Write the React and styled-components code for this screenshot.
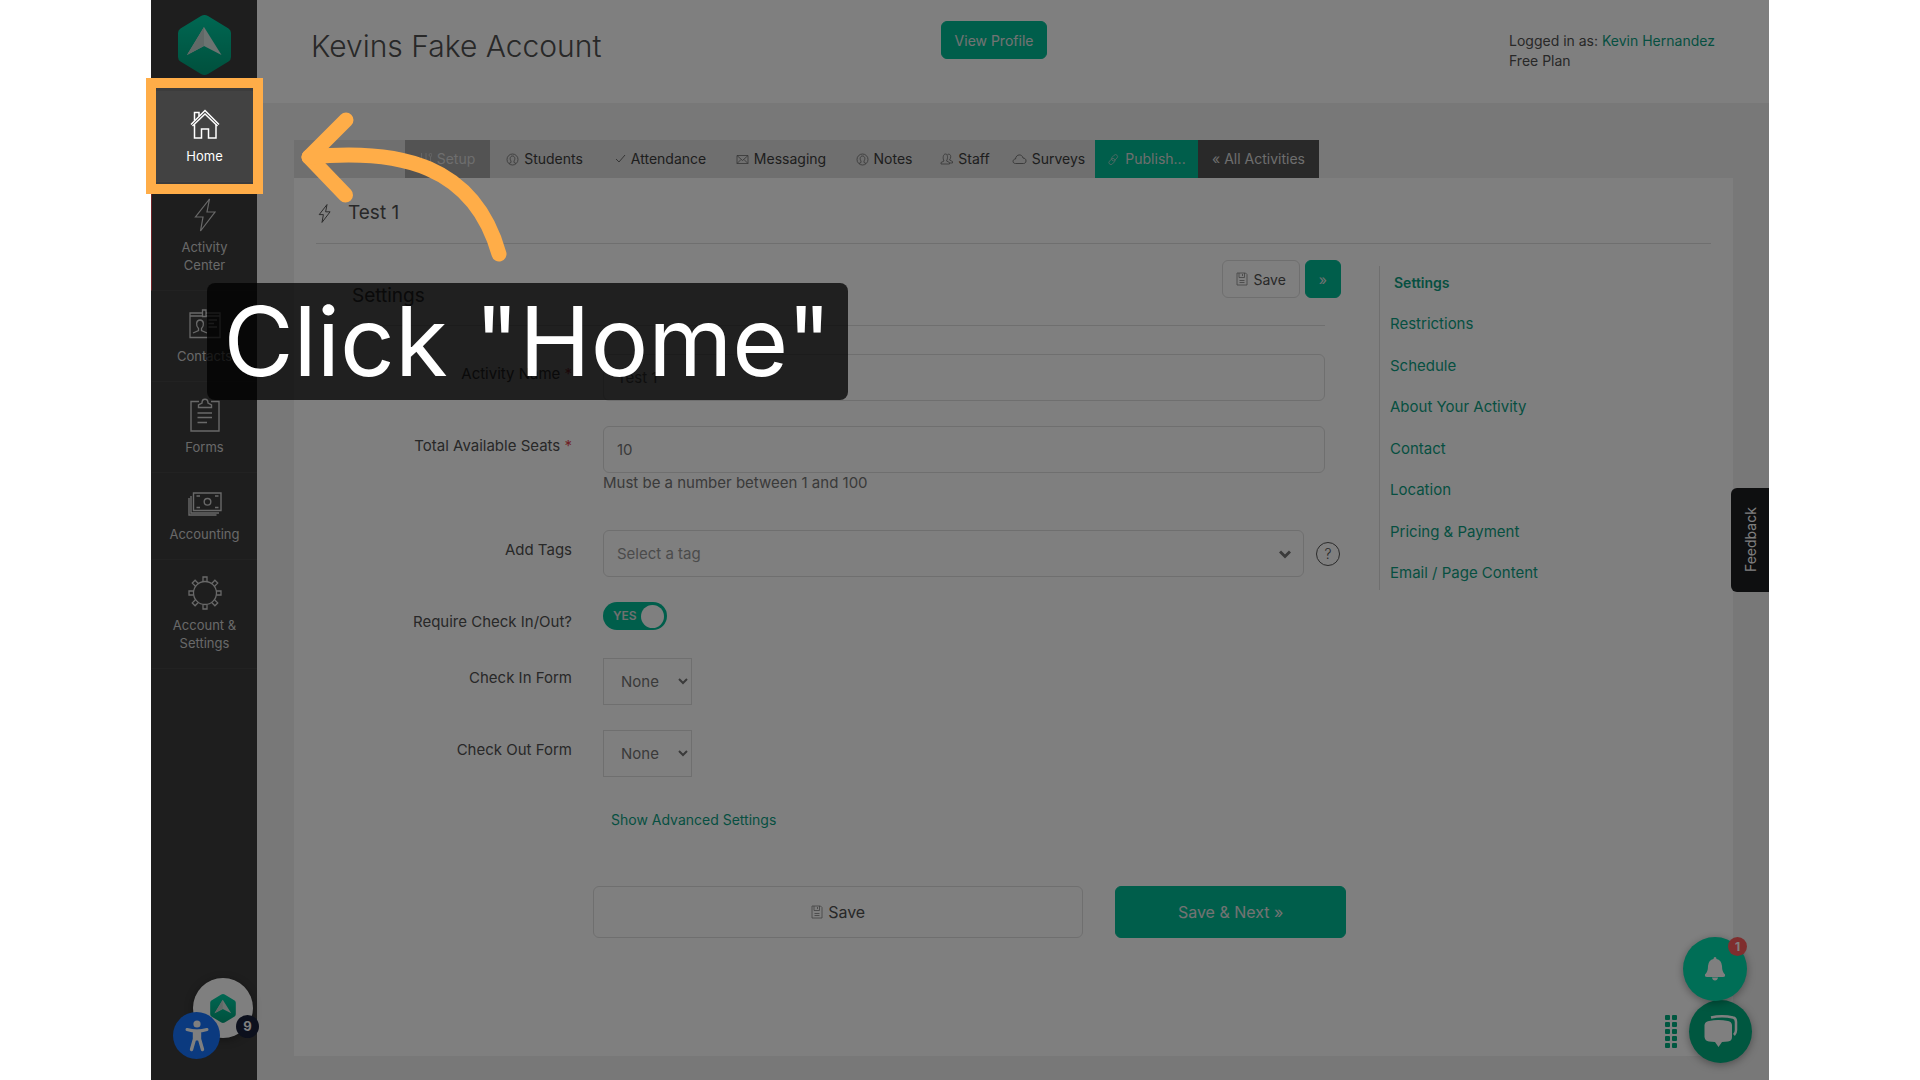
import React, { useState } from "react";
import styled, { createGlobalStyle, ThemeProvider } from "styled-components";

const theme = {
  green: "#00bc96",
  link: "#0d9f83",
  text: "#505050",
  muted: "#747474",
  line: "#dedede",
  band: "#f0f0f0",
  dark: "#3c3c3c",
  orange: "#ffad48",
};

const GlobalStyle = createGlobalStyle`
  * {
    box-sizing: border-box;
  }
  body {
    margin: 0;
    background: #ffffff;
    font-family: Inter, "Open Sans", sans-serif;
    font-size: 14px;
    line-height: 20px;
    color: #505050;
  }
  a {
    text-decoration: none;
  }
  button, input, select {
    font-family: inherit;
  }
`;

const Page = styled.div`
  min-height: 100vh;
  padding: 0 151px;
  display: flex;
`;

const Stage = styled.div`
  position: relative;
  flex: 1;
  display: flex;
  overflow: hidden;
  background: ${({ theme }) => theme.band};
`;

/* sidebar */

const Sidebar = styled.nav`
  width: 106px;
  flex-shrink: 0;
  background: ${({ theme }) => theme.dark};
`;

const LogoLink = styled.a`
  height: 91px;
  padding-top: 15px;
  display: flex;
  justify-content: center;
  align-items: flex-start;
`;

const SideItem = styled.a`
  display: flex;
  flex-direction: column;
  align-items: center;
  gap: 4px;
  padding: 14px 14px 16px;
  border-bottom: 1px solid #444444;
  border-left: 1px solid ${({ $current }) => ($current ? "#e0454f" : "transparent")};
  background: ${({ $hover }) => ($hover ? "#424242" : "transparent")};
  color: ${({ $hover }) => ($hover ? "#ffffff" : "#d2d2d2")};
  font-size: 13px;
  line-height: 18px;
  text-align: center;
`;

const SideIcon = styled.span`
  height: ${({ $short }) => ($short ? 34 : 38)}px;
  display: flex;
  align-items: center;
`;

/* header */

const Content = styled.div`
  flex: 1;
  display: flex;
  flex-direction: column;
`;

const Header = styled.header`
  height: 103px;
  padding: 21px 47px 0 54px;
  display: grid;
  grid-template-columns: 14fr auto 15fr;
  align-items: start;
  background: #ffffff;
`;

const AccountName = styled.h1`
  margin: 0;
  padding-top: 8px;
  font-size: 30px;
  line-height: 34px;
  font-weight: 300;
`;

const UserInfo = styled.div`
  justify-self: end;
  min-width: 213px;
  padding-top: 10px;
`;

const TextLink = styled.a`
  color: ${({ theme }) => theme.link};
`;

const Button = styled.button`
  display: flex;
  align-items: center;
  justify-content: center;
  gap: 5px;
  height: ${({ $large }) => ($large ? 52 : 38)}px;
  padding: 0 ${({ $large }) => ($large ? 0 : 13)}px;
  flex: ${({ $grow }) => ($grow ? `${$grow} 1 0` : "none")};
  font-size: ${({ $large }) => ($large ? 16 : 14)}px;
  border-radius: 6px;
  border: 1px solid ${({ $primary, theme }) => ($primary ? theme.green : theme.line)};
  background: ${({ $primary, theme }) => ($primary ? theme.green : "#ffffff")};
  color: ${({ $primary, theme }) => ($primary ? "#e6e6e6" : theme.text)};

  svg {
    opacity: 0.7;
  }
`;

/* tabs and panel */

const Work = styled.main`
  flex: 1;
  padding: 37px 36px 24px 37px;
  display: flex;
  flex-direction: column;
`;

const Tabs = styled.div`
  align-self: flex-start;
  display: flex;
  padding-left: 111px;
  background: #dedede;
`;

const Tab = styled.a`
  min-width: ${({ $w }) => $w}px;
  height: 38px;
  display: flex;
  align-items: center;
  justify-content: center;
  gap: 5px;
  font-size: 14px;
  color: ${({ $tone }) => ($tone ? "#dcdcdc" : "#3c3c3c")};
  background: ${({ $tone, theme }) =>
    ({ current: "#a6a6a6", green: theme.green, dark: "#525252" })[$tone] || "transparent"};

  svg {
    opacity: 0.7;
  }
`;

const Panel = styled.section`
  flex: 1;
  padding: 0 22px;
  background: #ffffff;
`;

const PanelTitle = styled.h2`
  margin: 0;
  height: 66px;
  padding: 5px 2px 0;
  display: flex;
  align-items: center;
  gap: 17px;
  border-bottom: 1px solid ${({ theme }) => theme.line};
  font-size: 19px;
  font-weight: 400;
`;

const Columns = styled.div`
  display: flex;
`;

const Form = styled.form`
  flex: 1;
  padding: 16px 33px 0 0;
`;

const FormHead = styled.div`
  height: 65px;
  padding: 0 5px 0 36px;
  display: flex;
  gap: 5px;
`;

const FormTitle = styled.h3`
  flex: 1;
  margin: 0;
  padding-top: 24px;
  font-size: 19px;
  line-height: 24px;
  font-weight: 400;
`;

const Rule = styled.hr`
  margin: 0 21px 28px 36px;
  border: 0;
  border-top: 1px solid ${({ theme }) => theme.line};
`;

const Fields = styled.div`
  display: flex;
  flex-direction: column;
  gap: 25px;
  padding-right: 21px;
`;

const Row = styled.div`
  display: grid;
  grid-template-columns: 256px 1fr;
  column-gap: 31px;
`;

const Label = styled.label`
  padding-top: 10px;
  font-size: 15px;
  text-align: right;
`;

const Star = styled.span`
  color: #e0454f;
`;

const Input = styled.input`
  width: 100%;
  height: 47px;
  padding: 0 13px;
  border: 1px solid ${({ theme }) => theme.line};
  border-radius: 6px;
  font-size: 15px;
  color: ${({ theme }) => theme.muted};
`;

const Hint = styled.div`
  height: 32px;
  font-size: 15px;
  color: ${({ theme }) => theme.muted};
`;

const TagLine = styled.div`
  display: flex;
  align-items: center;
  gap: 12px;
  margin-right: -15px;
`;

const TagBox = styled.div`
  position: relative;
  flex: 1;

  svg {
    position: absolute;
    right: 13px;
    top: 20px;
    pointer-events: none;
  }
`;

const TagSelect = styled.select`
  display: block;
  width: 100%;
  height: 47px;
  padding: 0 13px;
  appearance: none;
  border: 1px solid ${({ theme }) => theme.line};
  border-radius: 6px;
  background: #ffffff;
  font-size: 15px;
  color: #979797;
`;

const HelpButton = styled.button`
  width: 24px;
  height: 24px;
  padding: 0;
  border: 1px solid #555555;
  border-radius: 50%;
  background: transparent;
  font-size: 14px;
  font-weight: 300;
  line-height: 20px;
  color: ${({ theme }) => theme.text};
`;

const SmallSelect = styled.select`
  width: 89px;
  height: 47px;
  padding: 0 4px 0 13px;
  border: 1px solid ${({ theme }) => theme.line};
  border-radius: 0;
  background: #ffffff;
  font-size: 15px;
  color: ${({ theme }) => theme.muted};
`;

const SwitchCell = styled.div`
  height: 31px;
`;

const Switch = styled.label`
  display: flex;
  align-items: center;
  justify-content: space-between;
  width: 64px;
  height: 28px;
  padding: 0 3px 0 10px;
  border-radius: 14px;
  background: ${({ $on, theme }) => ($on ? theme.green : "#bbbbbb")};
  flex-direction: ${({ $on }) => ($on ? "row" : "row-reverse")};
  color: #e0e0e0;
  font-size: 12px;
  font-weight: 600;

  input {
    position: absolute;
    opacity: 0;
  }
`;

const Knob = styled.span`
  width: 23px;
  height: 23px;
  border-radius: 50%;
  background: #ffffff;
`;

const Advanced = styled.div`
  padding: 8px 0 0 8px;
  grid-column: 2;
`;

const FormFoot = styled.div`
  display: flex;
  gap: 32px;
  padding: 56px 0 0 277px;
`;

const SectionNav = styled.nav`
  width: 332px;
  min-height: 324px;
  margin-top: 22px;
  padding: 8px 0 8px 10px;
  align-self: flex-start;
  display: flex;
  flex-direction: column;
  align-items: flex-start;
  justify-content: space-between;
  border-left: 1px solid ${({ theme }) => theme.line};
`;

const SectionLink = styled.a`
  font-size: ${({ $current }) => ($current ? 14 : 15)}px;
  line-height: 18px;
  color: ${({ theme }) => theme.link};
  font-weight: ${({ $current }) => ($current ? 600 : 400)};
  padding-left: ${({ $current }) => ($current ? 4 : 0)}px;
`;

/* floating widgets */

const Feedback = styled.button`
  position: absolute;
  right: 0;
  top: 488px;
  width: 38px;
  height: 104px;
  padding: 0;
  border: 0;
  border-radius: 0 6px 6px 0;
  background: #1c1e21;
  color: #ffffff;
  font-size: 14px;
  writing-mode: vertical-rl;
  transform: rotate(180deg);
`;

const Bubble = styled.button`
  position: absolute;
  left: ${({ $left }) => ($left === undefined ? "auto" : `${$left}px`)};
  right: ${({ $right }) => ($right === undefined ? "auto" : `${$right}px`)};
  bottom: ${({ $bottom }) => $bottom}px;
  width: ${({ $size }) => $size}px;
  height: ${({ $size }) => $size}px;
  padding: 0;
  display: flex;
  align-items: center;
  justify-content: center;
  border: 0;
  border-radius: 50%;
  background: ${({ $color }) => $color};
  box-shadow: ${({ $flat }) => ($flat ? "none" : "0 2px 8px rgba(0, 0, 0, 0.35)")};
  color: #ffffff;
`;

const Count = styled.span`
  position: absolute;
  right: ${({ $right }) => $right}px;
  ${({ $side }) => $side}: 0;
  width: ${({ $size }) => $size}px;
  height: ${({ $size }) => $size}px;
  border-radius: 50%;
  background: ${({ $color }) => $color};
  color: #ffffff;
  font-size: ${({ $size }) => ($size > 20 ? 13 : 12)}px;
  font-weight: 700;
  line-height: ${({ $size }) => $size}px;
  text-align: center;
`;

const DotGrip = styled.div`
  position: absolute;
  right: 92px;
  bottom: 32px;
  display: grid;
  grid-template-columns: 5px 5px;
  grid-auto-rows: 5px;
  gap: 2px;

  span {
    border-radius: 1px;
    background: #00ae80;
  }
`;

/* tour step */

const TourLayer = styled.div`
  position: absolute;
  inset: 0;
  pointer-events: none;
`;

const Dim = styled.div`
  position: absolute;
  inset: 0;
  overflow: hidden;

  &::before {
    content: "";
    position: absolute;
    left: 5px;
    top: 88px;
    width: 97px;
    height: 96px;
    box-shadow: 0 0 0 3000px rgba(0, 0, 0, 0.5);
  }
`;

const TourFrame = styled.div`
  position: absolute;
  left: 146px;
  top: 78px;
  width: 117px;
  height: 116px;
  border: 10px solid ${({ theme }) => theme.orange};
  pointer-events: none;
`;

const TourArrow = styled.svg`
  position: absolute;
  left: 296px;
  top: 106px;
  pointer-events: none;
`;

const TourText = styled.div`
  position: absolute;
  left: 207px;
  top: 283px;
  width: 641px;
  height: 117px;
  border-radius: 8px;
  background: rgba(0, 0, 0, 0.75);
  color: #ffffff;
  font-size: 96px;
  font-weight: 400;
  line-height: 116px;
  text-align: center;
  white-space: nowrap;
`;

const Line = ({ w, h, sw = 1, children }) => (
  <svg
    width={w}
    height={h}
    viewBox={`0 0 ${w} ${h}`}
    fill="none"
    stroke="currentColor"
    strokeWidth={sw}
    aria-hidden="true"
  >
    {children}
  </svg>
);

const Hexagon = ({ id, w, h }) => (
  <svg width={w} height={h} viewBox="0 0 53 60" aria-hidden="true">
    <defs>
      <linearGradient id={id} x1="0" y1="0" x2="0" y2="1">
        <stop offset="0" stopColor="#00cfa5" />
        <stop offset="1" stopColor="#00a07a" />
      </linearGradient>
    </defs>
    <path
      d="M23 1Q26.500-1 30 1L50.500 13.500Q53 15 53 18V42Q53 45 50.500 46.500L30 59Q26.500 61 23 59L2.500 46.500Q0 45 0 42V18Q0 15 2.500 13.500Z"
      fill={`url(#${id})`}
    />
    <path d="M26 12L43.500 40L26 31L9 40Z" fill="#d9e6e2" />
    <path d="M26 12V31L9 40Z" fill="#c3d3ce" />
  </svg>
);

const HomeIcon = () => (
  <Line w={30} h={30} sw={1.5}>
    <path d="M1 15.500L15 1.500L29 15.500M2.500 17L15 5L27.500 17" />
    <path d="M4.500 15.500V29H11.500V20H18.500V29H26V15.500M4.500 11.500V3.500H9V7" />
  </Line>
);

const BoltIcon = ({ w = 22, h = 34 }) => (
  <svg width={w} height={h} viewBox="0 0 22 34" fill="none" stroke="currentColor" strokeWidth={w > 15 ? 1.200 : 1.700} aria-hidden="true">
    <path d="M15.500 1L1.500 19H9L6.500 33L21 14H13Z" />
  </svg>
);

const ContactsIcon = () => (
  <Line w={32} h={30} sw={1.300}>
    <path d="M13 4H1V28.500H31V4H17M1 7H13M17 7H31M13.500 1H17V7.500H13.500Z" />
    <path d="M4 24L9.500 21.500V19.500C6.500 16.500 7 11 11 11S15.500 16.500 12.500 19.500V21.500L18 24M19.500 11H28M19.500 14.500H25M19.500 18H28" />
  </Line>
);

const FormsIcon = () => (
  <Line w={30} h={34} sw={1.400}>
    <path d="M9 3.500H1V33H29V3.500H21" />
    <path d="M8.500 9.500V7L12 5C12 0 18 0 18 5L21.500 7V9.500ZM7.500 15H22M7.500 19.500H22M7.500 24.500H17" />
  </Line>
);

const MoneyIcon = () => (
  <Line w={34} h={24} sw={1.400}>
    <path d="M5.500 1H33V18.500H5.500ZM3 4V21H31M1 6V23H28.500" />
    <circle cx="19.500" cy="9.800" r="3.300" />
    <path d="M8.500 4H12M27 4H30.500M8.500 15.500H12M27 15.500H30.500" />
  </Line>
);

const GearIcon = () => (
  <Line w={34} h={34} sw={1.300}>
    <circle cx="17" cy="17" r="11.500" />
    {[0, 45, 90, 135, 180, 225, 270, 315].map((a) => (
      <path key={a} d="M15 5.500V1H19V5.500" transform={`rotate(${a} 17 17)`} />
    ))}
  </Line>
);

const SlidersIcon = () => (
  <Line w={12} h={14}>
    <path d="M1.500 1V13M6 1V13M10.500 5V13M4.500 8H7.500" />
    <circle cx="10.500" cy="3" r="1.500" />
  </Line>
);

const PersonIcon = () => (
  <Line w={13} h={13} sw={0.800}>
    <circle cx="6.500" cy="6.500" r="5.500" />
    <path d="M3 10.500L5 9.500V8C3.500 6 4 3 6.500 3S9.500 6 8 8V9.500L10 10.500" />
  </Line>
);

const CheckIcon = () => (
  <Line w={11} h={12}>
    <path d="M1 6L4 9L10 2" />
  </Line>
);

const MailIcon = () => (
  <Line w={13} h={11} sw={0.800}>
    <path d="M1 1.500H12V9.500H1ZM1 1.500L6.500 6.500L12 1.500M1 9.500L5 5.500M12 9.500L8 5.500" />
  </Line>
);

const StaffIcon = () => (
  <Line w={13} h={12} sw={0.800}>
    <path d="M1 11V9.500L4 8C2.500 5.500 3 1 5.500 1S8 5.500 6.500 8L9.500 9.500V11ZM7.500 1.500C10.500 0 12 4 9.500 7L12.500 8.500V10H10" />
  </Line>
);

const CloudIcon = () => (
  <Line w={15} h={12} sw={0.900}>
    <path d="M3.500 10.500C0 10.500 .5 6 3.500 6C4 1 10 .500 11 5C15 5 15 10.500 11.500 10.500Z" />
  </Line>
);

const LinkIcon = () => (
  <Line w={13} h={13} sw={0.900}>
    <rect x="5.500" y="1.200" width="4" height="7" rx="2" transform="rotate(45 7.500 4.700)" />
    <rect x="3" y="5" width="4" height="7" rx="2" transform="rotate(45 5 8.500)" />
  </Line>
);

const SaveIcon = () => (
  <Line w={12} h={14} sw={0.800}>
    <path d="M1 1H9.500L11 2.500V13H1ZM3 1V5.500H8.500V1M6.500 2V4M3.500 8.500H8.500M3.500 10.500H8.500" />
  </Line>
);

const sideItems = [
  { text: "Home", icon: <HomeIcon />, hover: true },
  { text: "Activity Center", icon: <BoltIcon />, current: true },
  { text: "Contacts", icon: <ContactsIcon /> },
  { text: "Forms", icon: <FormsIcon /> },
  { text: "Accounting", icon: <MoneyIcon />, short: true },
  { text: "Account & Settings", icon: <GearIcon /> },
];

const tabs = [
  { text: "Setup", icon: <SlidersIcon />, w: 85, tone: "current" },
  { text: "Students", icon: <PersonIcon />, w: 109 },
  { text: "Attendance", icon: <CheckIcon />, w: 123 },
  { text: "Messaging", icon: <MailIcon />, w: 118 },
  { text: "Notes", icon: <PersonIcon />, w: 88 },
  { text: "Staff", icon: <StaffIcon />, w: 74 },
  { text: "Surveys", icon: <CloudIcon />, w: 93 },
  { text: "Publish...", icon: <LinkIcon />, w: 103, tone: "green" },
  { text: "« All Activities", w: 121, tone: "dark" },
];

const sections = [
  "Settings",
  "Restrictions",
  "Schedule",
  "About Your Activity",
  "Contact",
  "Location",
  "Pricing & Payment",
  "Email / Page Content",
];

const SettingsForm = () => {
  const [name, setName] = useState("Test 1");
  const [seats, setSeats] = useState("10");
  const [checkIn, setCheckIn] = useState(true);

  return (
    <Form onSubmit={(e) => e.preventDefault()}>
      <FormHead>
        <FormTitle>Settings</FormTitle>
        <Button type="submit"><SaveIcon />Save</Button>
        <Button type="button" $primary aria-label="Next">»</Button>
      </FormHead>
      <Rule />
      <Fields>
        <Row>
          <Label htmlFor="name">Activity Name <Star>*</Star></Label>
          <Input id="name" value={name} onChange={(e) => setName(e.target.value)} />
        </Row>
        <Row>
          <Label htmlFor="seats">Total Available Seats <Star>*</Star></Label>
          <div>
            <Input id="seats" value={seats} onChange={(e) => setSeats(e.target.value)} />
            <Hint>Must be a number between 1 and 100</Hint>
          </div>
        </Row>
        <Row>
          <Label htmlFor="tags">Add Tags</Label>
          <TagLine>
            <TagBox>
              <TagSelect id="tags">
                <option>Select a tag</option>
              </TagSelect>
              <Line w={12} h={9} sw={3}>
                <path d="M1 1.500L6 6.500L11 1.500" stroke="#777777" />
              </Line>
            </TagBox>
            <HelpButton type="button">?</HelpButton>
          </TagLine>
        </Row>
        <Row>
          <Label htmlFor="checkin">Require Check In/Out?</Label>
          <SwitchCell>
            <Switch $on={checkIn}>
              <input
                id="checkin"
                type="checkbox"
                checked={checkIn}
                onChange={(e) => setCheckIn(e.target.checked)}
              />
              {checkIn ? "YES" : "NO"}
              <Knob />
            </Switch>
          </SwitchCell>
        </Row>
        <Row>
          <Label htmlFor="inform">Check In Form</Label>
          <SmallSelect id="inform">
            <option>None</option>
          </SmallSelect>
        </Row>
        <Row>
          <Label htmlFor="outform">Check Out Form</Label>
          <SmallSelect id="outform">
            <option>None</option>
          </SmallSelect>
        </Row>
        <Row>
          <Advanced>
            <TextLink href="#advanced">Show Advanced Settings</TextLink>
          </Advanced>
        </Row>
      </Fields>
      <FormFoot>
        <Button type="submit" $large $grow={491}><SaveIcon />Save</Button>
        <Button type="button" $large $primary $grow={230}>Save &amp; Next »</Button>
      </FormFoot>
    </Form>
  );
};

const Widgets = () => (
  <>
    <Feedback>Feedback</Feedback>
    <Bubble $left={42} $bottom={42} $size={60} $color="#ffffff" aria-label="Checklist">
      <Hexagon id="hexSmall" w={26} h={29} />
      <Count $right={-6} $side="bottom" $size={23} $color="#18203a">9</Count>
    </Bubble>
    <Bubble $left={22} $bottom={21} $size={47} $color="#1674ff" $flat aria-label="Accessibility">
      <svg width="24" height="32" viewBox="0 0 24 32" fill="none" stroke="currentColor" strokeLinecap="round" strokeLinejoin="round" aria-hidden="true">
        <circle cx="12" cy="4" r="3.600" fill="currentColor" stroke="none" />
        <path d="M2 9.500Q12 12.500 22 9.500" strokeWidth="3" />
        <path d="M9.500 11.500H14.500V19L17.500 29.500M9.500 11.500V19L6.500 29.500" strokeWidth="3.400" />
        <path d="M10 12H14V20H10Z" fill="currentColor" />
      </svg>
    </Bubble>
    <DotGrip>
      {[...Array(10)].map((_, i) => <span key={i} />)}
    </DotGrip>
    <Bubble $right={17} $bottom={17} $size={63} $color="#00ae80" aria-label="Chat">
      <svg width="34" height="33" viewBox="0 0 34 33" aria-hidden="true">
        <path d="M7 2.500Q18 0 29 2.500Q32 3 32 7V15Q32 18 30 20" fill="none" stroke="currentColor" strokeWidth="2.500" />
        <path d="M5 6Q14 4 24 6Q27.500 6.500 28 10V22Q28 26 24 26.500L18 27L14.500 32L11 27L5 26.500Q1 26 .500 22V10Q1 6.500 5 6Z" fill="currentColor" />
      </svg>
    </Bubble>
    <Bubble $right={22} $bottom={79} $size={64} $color="#00dcac" aria-label="Notifications">
      <svg width="22" height="24" viewBox="0 0 22 24" fill="currentColor" aria-hidden="true">
        <path d="M11 0Q12.500 0 12.500 2Q17.500 3 18 9Q18 15 21 17.500Q21.500 20 19 20H3Q.500 20 1 17.500Q4 15 4 9Q4.500 3 9.500 2Q9.500 0 11 0ZM8 20.500H14Q13.500 23.500 11 23.500T8 20.500Z" />
      </svg>
      <Count $right={0} $side="top" $size={19} $color="#ff5c5c">1</Count>
    </Bubble>
  </>
);

const App = () => {
  return (
    <ThemeProvider theme={theme}>
      <GlobalStyle />
      <Page>
        <Stage>
          <Sidebar>
            <LogoLink href="#top" aria-label="Dashboard">
              <Hexagon id="hexLogo" w={53} h={60} />
            </LogoLink>
            {sideItems.map((item) => (
              <SideItem key={item.text} href="#nav" $hover={item.hover} $current={item.current}>
                <SideIcon $short={item.short}>{item.icon}</SideIcon>
                {item.text}
              </SideItem>
            ))}
          </Sidebar>
          <Content>
            <Header>
              <AccountName>Kevins Fake Account</AccountName>
              <Button $primary>View Profile</Button>
              <UserInfo>
                Logged in as: <TextLink href="#user">Kevin Hernandez</TextLink>
                <div>Free Plan</div>
              </UserInfo>
            </Header>
            <Work>
              <Tabs>
                {tabs.map((tab) => (
                  <Tab key={tab.text} href="#tab" $w={tab.w} $tone={tab.tone}>
                    {tab.icon}
                    {tab.text}
                  </Tab>
                ))}
              </Tabs>
              <Panel>
                <PanelTitle><BoltIcon w={13} h={19} />Test 1</PanelTitle>
                <Columns>
                  <SettingsForm />
                  <SectionNav>
                    {sections.map((text, i) => (
                      <SectionLink key={text} href="#section" $current={i === 0}>{text}</SectionLink>
                    ))}
                  </SectionNav>
                </Columns>
              </Panel>
            </Work>
          </Content>
          <Widgets />
          <TourLayer>
            <Dim />
          </TourLayer>
        </Stage>
      </Page>
      <TourFrame />
      <TourArrow width="220" height="160" viewBox="296 106 220 160" fill="none" stroke="#ffad48" strokeWidth="15" strokeLinecap="round" strokeLinejoin="round">
        <path d="M346 120L309 157L345.500 195" />
        <path d="M309 157C400 148 474 165 499 254" />
      </TourArrow>
      <TourText>Click "Home"</TourText>
    </ThemeProvider>
  );
};

export default App;
